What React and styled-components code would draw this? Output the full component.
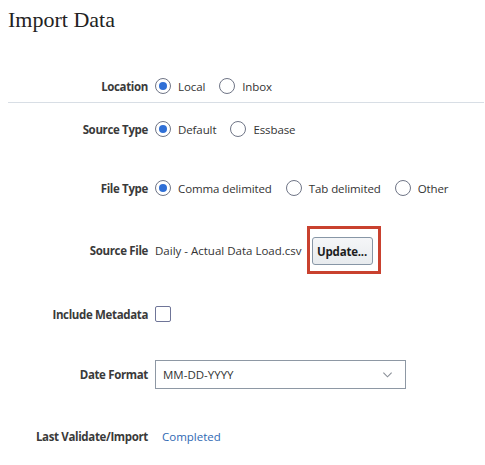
import { styled, createGlobalStyle } from "styled-components";

const GlobalStyle = createGlobalStyle`
    body{
        margin: 0;
        background: #FFFFFF;
        font-family: "Open Sans", "Noto Sans", sans-serif;
    }
`;

const StyledPage = styled.div`
    width: 485px;
    height: 465px;
    padding: 0 1px 0 8px;
    box-sizing: border-box;
    overflow: hidden;
`;

const Title = styled.h1`
    margin: 0;
    padding-top: 7px;
    font-family: "Liberation Serif", "DejaVu Serif", serif;
    font-weight: 400;
    font-size: 22px;
    line-height: 26px;
    color: #222222;
    height: 71px;
    box-sizing: border-box;
`;

const Row = styled.div`
    display: flex;
    align-items: center;
    height: 30px;
    margin-top: ${(p) => p.$top || 0}px;
`;

const Label = styled.span`
    width: 140px;
    flex: none;
    text-align: right;
    padding-right: 7px;
    font-size: 11.5px;
    font-weight: 700;
    color: #3a3a3a;
    letter-spacing: -0.35px;
`;

const Field = styled.div`
    display: flex;
    align-items: center;
    gap: 14px;
`;

const Option = styled.label`
    display: flex;
    align-items: center;
    gap: 7px;
    font-size: 11.5px;
    color: #333333;
    letter-spacing: -0.1px;
`;

const Radio = styled.span`
    width: 16px;
    height: 16px;
    box-sizing: border-box;
    border: 1.5px solid #6f7586;
    border-radius: 50%;
    display: flex;
    align-items: center;
    justify-content: center;
    &::after{
        content: "";
        width: 8px;
        height: 8px;
        border-radius: 50%;
        background: ${(p) => (p.$on ? "#2f6fd6" : "transparent")};
    }
`;

const Divider = styled.div`
    height: 1px;
    background: #d8dee5;
    margin-top: 1px;
`;

const Text = styled.span`
    font-size: 11.5px;
    color: #333333;
`;

const Highlight = styled.span`
    display: inline-flex;
    border: 3px solid #c9412f;
    padding: 8px 5px 6px 2px;
    margin: -14px 0 -14px 5px;
`;

const Button = styled.button`
    width: 61px;
    height: 28px;
    border: 1px solid #8796a6;
    border-radius: 3px;
    background: linear-gradient(#f5f6f8, #e8ebee);
    font-family: "Open Sans", "Noto Sans", sans-serif;
    font-weight: 700;
    font-size: 11.5px;
    color: #1d1d1d;
    padding: 0;
    letter-spacing: -0.2px;
`;

const Checkbox = styled.span`
    width: 16px;
    height: 16px;
    box-sizing: border-box;
    border: 1.5px solid #6f7598;
    border-radius: 2px;
`;

const Select = styled.div`
    width: 251px;
    height: 29px;
    box-sizing: border-box;
    border: 1px solid #8e98a4;
    display: flex;
    align-items: center;
    justify-content: space-between;
    padding: 0 12px 0 7px;
    font-size: 11.5px;
    color: #333333;
    svg{
        width: 11px;
        height: 11px;
    }
`;

const Link = styled.span`
    font-size: 11.5px;
    color: #2f69b3;
    padding-left: 7px;
`;

const RadioGroup = ({ options, selected }) => (
    <Field>
        {options.map((o) => (
            <Option key={o}>
                <Radio $on={o === selected} />
                {o}
            </Option>
        ))}
    </Field>
);

export default function App() {
    return (
        <StyledPage>
            <GlobalStyle />
            <Title>Import Data</Title>
            <Row>
                <Label>Location</Label>
                <RadioGroup options={["Local", "Inbox"]} selected="Local" />
            </Row>
            <Divider />
            <Row $top={11}>
                <Label>Source Type</Label>
                <RadioGroup options={["Default", "Essbase"]} selected="Default" />
            </Row>
            <Row $top={29}>
                <Label>File Type</Label>
                <RadioGroup options={["Comma delimited", "Tab delimited", "Other"]} selected="Comma delimited" />
            </Row>
            <Row $top={32}>
                <Label>Source File</Label>
                <Text>Daily - Actual Data Load.csv</Text>
                <Highlight>
                    <Button>Update...</Button>
                </Highlight>
            </Row>
            <Row $top={34}>
                <Label>Include Metadata</Label>
                <Checkbox />
            </Row>
            <Row $top={30}>
                <Label>Date Format</Label>
                <Select>
                    MM-DD-YYYY
                    <svg viewBox="0 0 12 12" fill="none" stroke="#8a8f98" strokeWidth="1.2">
                        <path d="M1.5 4l4.5 4.5L10.5 4" />
                    </svg>
                </Select>
            </Row>
            <Row $top={32}>
                <Label>Last Validate/Import</Label>
                <Link>Completed</Link>
            </Row>
        </StyledPage>
    );
}
